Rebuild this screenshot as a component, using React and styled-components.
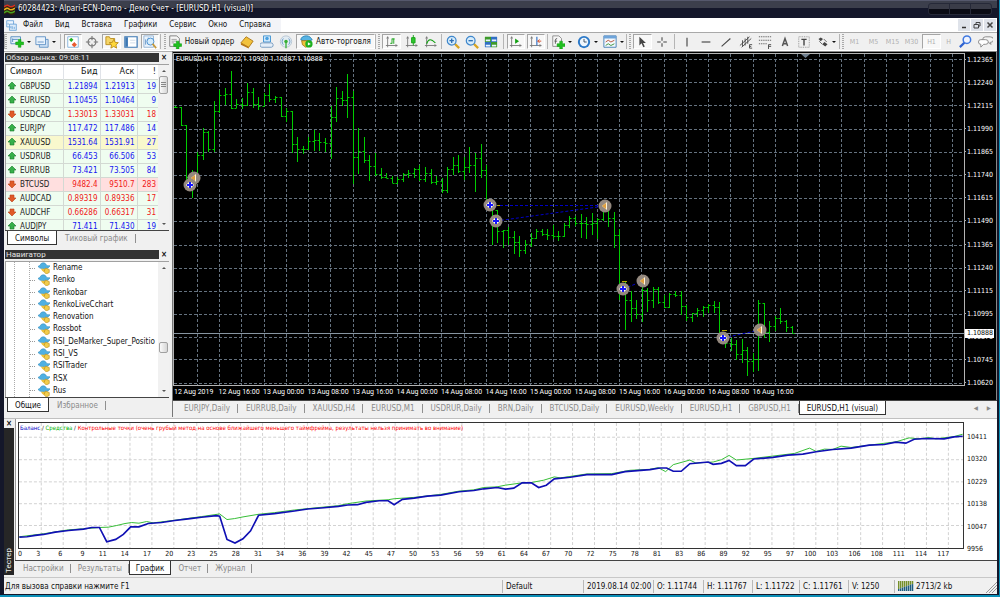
import React from "react";
import styled, { createGlobalStyle, css } from "styled-components";

const UI = `"DejaVu Sans Condensed", "Open Sans", sans-serif`;
const SMALL = `Roboto, "DejaVu Sans Condensed", sans-serif`;

const Global = createGlobalStyle`
  * { box-sizing: border-box; }
  body { margin: 0; background: #0b90b8; font-family: ${UI}; font-size: 8px; color: #111; }
  button { font: inherit; color: inherit; border: 0; background: none; padding: 0; margin: 0; }
`;

const Window = styled.div`
  display: flex;
  flex-direction: column;
  height: 100vh;
  min-height: 590px;
  border: solid #0b90b8;
  border-width: 0 1px 2px 0;
`;
const Frame = styled.div`
  display: flex;
  flex-direction: column;
  flex: 1;
  min-height: 0;
  background: #f0f0f0;
  border: solid #14172a;
  border-width: 0 2px 1px 4px;
`;

/* Title */
const TitleBar = styled.header`
  display: flex;
  align-items: center;
  justify-content: space-between;
  height: 18px;
  padding: 0 5px 0 0;
  background: linear-gradient(#55586c 0 1px, #3c3f4c 1px 8px, #14172a 8px);
  color: #fff;
`;
const TitleText = styled.h1`
  display: flex;
  align-items: center;
  gap: 3px;
  margin: 0;
  font: 400 8px/14px ${UI};
  text-shadow: 0 0 2px #000;
  white-space: nowrap;
`;
const WindowButtons = styled.div`
  display: flex;
  width: 64px;
  height: 12px;
  border: 1px solid #262938;
  border-radius: 3px;
  background: linear-gradient(#3a3c48 0 5px, #0a0b14 5px);
`;
const WindowButton = styled.button`
  flex: 1;
  & + & { border-left: 1px solid #262938; }
`;

/* Menu */
const MenuBar = styled.nav`
  display: flex;
  justify-content: space-between;
  height: 14px;
  background: #fff;
`;
const MenuList = styled.div`
  display: flex;
  align-items: center;
  gap: 12px;
  padding: 0 10px 0 2px;
  background: #f3f4f8;
`;
const MenuItem = styled.button`
  line-height: 12px;
  white-space: nowrap;
  svg { display: block; margin-right: -6px; }
`;
const MdiButtons = styled.div`
  display: flex;
  gap: 1px;
  padding: 1px 1px 1px 0;
`;
const MdiButton = styled.button`
  display: flex;
  align-items: center;
  justify-content: center;
  width: 12px;
  height: 12px;
  background: #dfe3ea;
`;

/* Toolbar */
const Toolbar = styled.div`
  display: flex;
  align-items: stretch;
  height: 19px;
  border-top: 1px solid #a9a9a9;
  border-bottom: 1px solid #fff;
  padding: 1px 0;
  background: #f0f0f0;
`;
const Group = styled.div`
  display: flex;
  flex: 0 0 auto;
  width: ${(p) => p.$w}px;
`;
const sunken = css`
  background: #f8f8f8;
  border: 1px solid;
  border-color: #a5a5a5 #fff #fff #a5a5a5;
`;
const Tool = styled.button`
  display: flex;
  flex: 1 1 0;
  min-width: 0;
  align-items: center;
  justify-content: center;
  gap: 3px;
  margin: 0 1px;
  svg { flex: none; }
  ${(p) => p.$on && sunken}
`;
const WideTool = styled(Tool)`
  flex: 0 0 auto;
  width: ${(p) => p.$w}px;
  margin: 0;
  line-height: 14px;
  white-space: nowrap;
`;
const PeriodTool = styled(Tool)`
  font: 7px/14px ${UI};
  color: #b0b0b0;
`;
const Separator = styled.i`
  flex: 0 0 auto;
  width: ${(p) => p.$w}px;
  background: linear-gradient(#b5b5b5, #b5b5b5) center / 1px 100% no-repeat;
`;
const Grip = styled.i`
  flex: 0 0 auto;
  width: ${(p) => p.$w}px;
  border-left: 1px solid #b5b5b5;
  background: repeating-linear-gradient(#aaa 0 1px, #f0f0f0 1px 2px) right 1px center / 2px 100% no-repeat;
`;
const Caret = styled.i`
  border: solid transparent;
  border-width: 2px 2px 0;
  border-top-color: #111;
`;

/* Main area */
const Main = styled.main`
  display: flex;
  flex: 1;
  min-height: 0;
`;
const Side = styled.aside`
  display: flex;
  flex-direction: column;
  flex: 0 0 168px;
  min-width: 0;
  gap: 5px;
  padding: 1px 3px 5px 1px;
  border-top: 1px solid #b0b0b0;
`;
const Panel = styled.section`
  display: flex;
  flex-direction: column;
  min-height: 0;
  min-width: 0;
  flex: ${(p) => p.$flex};
`;
const PanelHead = styled.div`
  display: flex;
  height: 9px;
  flex: none;
`;
const PanelTitle = styled.h2`
  flex: 1;
  margin: 0;
  padding-left: 1px;
  background: #333;
  color: #e4e4e4;
  font: 400 8px/9px ${SMALL};
`;
const CloseButton = styled.button`
  width: 10px;
  height: 9px;
  font: 700 8px/8px ${UI};
`;
const PanelBody = styled.div`
  display: flex;
  flex: 1;
  min-height: 0;
  margin-top: 2px;
  background: #fff;
  border-left: 1px solid #a0a0a0;
  border-top: 1px solid #a0a0a0;
  overflow: hidden;
`;
const ScrollTrack = styled.div`
  display: flex;
  flex-direction: column;
  align-items: center;
  flex: 0 0 11px;
  padding: 5px 0;
  background: #f1f1f1;
`;
const Arrow = styled.i`
  border: 2px solid transparent;
  ${(p) => (p.$up ? "border-bottom-color: #555; border-top: 0;" : "border-top-color: #555; border-bottom: 0;")}
`;
const Thumb = styled.div`
  width: 9px;
  height: ${(p) => p.$h}px;
  border: 1px solid #a0a0a0;
  border-radius: 2px;
  background: ${(p) => (p.$ribs ? "repeating-linear-gradient(#888 0 1px, transparent 1px 2px) center / 5px 5px no-repeat, " : "")}
    linear-gradient(90deg, #fafafa, #d6d6d6);
`;
const Fill = styled.div`flex: ${(p) => p.$n} 1 0;`;

const Quotes = styled.table`
  flex: 1;
  min-width: 0;
  align-self: flex-start;
  border-collapse: collapse;
  table-layout: fixed;
  width: 100%;
  font: 8px/13px ${UI};
  th { height: 14px; padding: 0 2px 0 4px; font-size: 9px; font-weight: 400; text-align: right; border-right: 1px solid #e0e3e8; }
  th:first-child { width: 57px; text-align: left; }
  th:nth-child(2), th:nth-child(3) { width: 37px; }
  th:last-child, td:last-child { border-right: 0; }
`;
const Quote = styled.tr`
  background: ${(p) => p.$bg || "#effdf0"};
  color: ${(p) => (p.$down ? "#f01818" : "#1414f0")};
  td { height: 14px; padding: 0 2px; text-align: right; border: solid #d3d9d3; border-width: 1px 1px 0 0; }
  td:first-child { color: #222; text-align: left; }
`;
const SymbolCell = styled.span`
  display: flex;
  align-items: center;
  gap: 4px;
`;

const Tabs = styled.div`
  display: flex;
  flex: none;
  align-items: flex-start;
  height: 15px;
  padding-left: ${(p) => p.$pad}px;
  border-top: 1px solid #444;
  color: #8a8a8a;
`;
const Tab = styled.button`
  height: 14px;
  padding: 0 ${(p) => p.$gap}px;
  white-space: nowrap;
  background: linear-gradient(#909090, #909090) right center / 1px 9px no-repeat;
  ${(p) =>
    p.$active &&
    css`
      background: #fff;
      color: #111;
      border: solid #333;
      border-width: 0 1px 1px;
      padding: 1px ${p.$gap - 1}px 0;
    `}
`;
const TabScroll = styled.div`
  display: flex;
  gap: 9px;
  margin-left: auto;
  padding-right: 6px;
  font-size: 6px;
  line-height: 14px;
`;

const Tree = styled.ul`
  display: grid;
  grid-auto-rows: 1fr;
  flex: 1;
  min-width: 0;
  margin: 0;
  padding: 0 0 0 24px;
  list-style: none;
  overflow: hidden;
  background:
    repeating-linear-gradient(#aaa 0 1px, transparent 1px 2px) 8px 0 / 1px 100% no-repeat,
    repeating-linear-gradient(#aaa 0 1px, transparent 1px 2px) 23px 0 / 1px 100% no-repeat;
`;
const Leaf = styled.li`
  display: flex;
  align-items: center;
  gap: 3px;
  min-height: 0;
  line-height: 12px;
  white-space: nowrap;
  &::before { content: ""; flex: none; width: 5px; border-top: 1px dotted #999; }
  svg { flex: none; }
`;

/* Price chart */
const ChartArea = styled.section`
  display: flex;
  flex-direction: column;
  flex: 1;
  min-width: 0;
  padding-bottom: 2px;
  border-left: 1px solid #777;
`;
const ChartFrame = styled.div`
  display: flex;
  flex: 1;
  min-height: 0;
  background: #000;
  border: 1px solid #888;
  border-width: 1px 1px 0 0;
  padding: 1px 0 2px;
  color: #fff;
  font: 7px/10px ${UI};
`;
const PlotColumn = styled.div`
  position: relative;
  display: flex;
  flex-direction: column;
  flex: 1;
  min-width: 0;
`;
const Plot = styled.svg`
  display: block;
  flex: 1;
  width: 100%;
  min-height: 0;
  border: 1px solid #b4b4b4;
`;
const Quoteline = styled.div`
  position: absolute;
  left: 3px;
  top: 1px;
  white-space: pre;
  font-family: ${SMALL};
`;
const TimeAxis = styled.div`
  display: flex;
  height: 12px;
  padding-left: 1px;
  overflow: hidden;
  font: 7px/12px ${SMALL};
`;
const Time = styled.span`
  flex: 0 0 calc(100% * 2 / 35.55);
  white-space: nowrap;
`;
const PriceAxis = styled.div`
  position: relative;
  display: flex;
  flex-direction: column;
  justify-content: space-between;
  flex: 0 0 31px;
  padding: 2px 0 10px 2px;
  span::before { content: ""; display: inline-block; width: 2px; height: 1px; margin: 0 1px 2px -3px; background: #aaa; }
`;
const PriceTag = styled.b`
  position: absolute;
  left: 0;
  right: 2px;
  top: 80%;
  padding-left: 2px;
  background: #fff;
  color: #000;
  font: 7px/9px ${UI};
`;

/* Tester */
const Tester = styled.section`
  display: flex;
  flex: none;
  margin-top: 1px;
  padding-bottom: 2px;
  border-top: 1px solid #c0c0c0;
`;
const TesterRail = styled.div`
  display: flex;
  flex-direction: column;
  flex: 0 0 10px;
  padding: 0 1px 0 0;
`;
const RailTitle = styled.h2`
  flex: 1;
  margin: 0;
  padding-top: 2px;
  writing-mode: vertical-rl;
  transform: rotate(180deg);
  background: #262626;
  color: #eee;
  font: 400 8px/9px ${SMALL};
`;
const TesterBody = styled.div`
  flex: 1;
  min-width: 0;
`;
const TesterChart = styled.div`
  display: flex;
  padding: 3px 0 0 2px;
  background: #fff;
  border-left: 1px solid #999;
  font: 7px/10px ${UI};
`;
const TesterPlot = styled.div`
  position: relative;
  flex: 1;
  min-width: 0;
`;
const Curve = styled.svg`
  display: block;
  width: 100%;
  height: 127px;
  border: 1px solid #333;
`;
const Legend = styled.div`
  position: absolute;
  left: 2px;
  top: 1px;
  white-space: pre;
  font: 6px/10px ${UI};
`;
const Ink = styled.span`color: ${(p) => p.$c};`;
const CountAxis = styled.div`
  display: flex;
  height: 11px;
`;
const Count = styled.span`
  display: flex;
  justify-content: flex-end;
  flex: 0 0 calc(100% / 42.66);
  min-width: 0;
  &:first-child { justify-content: space-between; }
`;
const MoneyAxis = styled.div`
  display: flex;
  flex-direction: column;
  justify-content: space-between;
  flex: 0 0 33px;
  height: 132px;
  padding: 10px 0 0 3px;
`;

/* Status */
const Status = styled.footer`
  display: flex;
  flex: none;
  align-items: center;
  height: 17px;
  border-top: 1px solid #c8c8c8;
`;
const StatusCell = styled.span`
  display: flex;
  align-items: center;
  gap: 2px;
  line-height: 13px;
  flex: ${(p) => (p.$w ? `0 0 ${p.$w}px` : 1)};
  padding-left: ${(p) => (p.$w ? 3 : 1)}px;
  white-space: nowrap;
  border-left: ${(p) => (p.$w ? "1px solid #b8b8b8" : 0)};
`;
const SizeGrip = styled.svg`
  margin-left: auto;
  align-self: flex-end;
`;

const G = "#12a012";
const axis = <path d="M3 2v12M1 12h13M2 4l1-2 1 2M12 11l2 1-2 1" stroke="#777" fill="none" />;
const plus = (x, y) => <path d={`M${x} ${y - 4}h3v3h3v3h-3v3h-3v-3h-3v-3h3z`} fill="#1fc01f" stroke="#0a9a0a" strokeWidth=".6" />;
const lens = (sign) => (
  <>
    <path d="M10 10l5 5" stroke="#d9a520" strokeWidth="2.6" />
    <circle cx="6.5" cy="6.5" r="5" fill="#d6ecfb" stroke="#3f87cc" strokeWidth="1.4" />
    <path d={sign} stroke="#2d6fb5" strokeWidth="1.5" fill="none" />
  </>
);
const ICONS = {
  newChart: <><path d="M1 2h11v8H1z" fill="#e8f2fb" stroke="#4c86bd" /><path d="M3 4v4M3 5h6" stroke="#4c86bd" />{plus(9.5, 9)}</>,
  profiles: <><path d="M5 5h10v9H5z" fill="#cfe2f5" stroke="#5c8fc4" /><path d="M1 2h11v9H1z" fill="#eaf3fc" stroke="#5c8fc4" /><path d="M3 8h7" stroke="#5c8fc4" /></>,
  market: <><path d="M2 2h12v12H2z" fill="#fff" stroke="#7fb0dc" /><path d="M6 3l2.500 2.500L6 8 3.500 5.500z" fill="#22b022" /><path d="M9.500 8l3 3-3 3-3-3z" fill="#e85a30" /></>,
  target: <path d="M8 1v5M8 10v5M1 8h5M10 8h5M8 3.500a4.500 4.500 0 1 0 0 9 4.500 4.500 0 0 0 0-9z" fill="none" stroke="#777" strokeWidth="1.3" />,
  navigator: <><path d="M1 2h4l1 2h5v7H1z" fill="#f5d568" stroke="#b88a18" /><path d="M10 5l1.6 3.4 3.6.4-2.7 2.5.8 3.7-3.3-1.9L6.700 15l.8-3.700L4.800 8.800l3.600-.4z" fill="#ffd83a" stroke="#b88a18" /></>,
  terminal: <><path d="M1 2h14v12H1z" fill="#fff" stroke="#3d78b4" strokeWidth="1.4" /><path d="M1.500 2.500h3v11h-3z" fill="#3d78b4" /><path d="M7 6h6M7 9h6" stroke="#ccd8e6" /></>,
  tester: <><path d="M1 1h11v13H1z" fill="#eaf3fc" stroke="#8fb1d2" /><path d="M3 11V5M6 9V3" stroke="#5c8fc4" /><circle cx="8.500" cy="7.500" r="4" fill="#d6ecfb" stroke="#3f87cc" /><path d="M11 10l4 5" stroke="#c79a3a" strokeWidth="2" /></>,
  order: <><path d="M2 1h8l3 3v9H2z" fill="#f6f6f6" stroke="#777" /><path d="M4 5h6M4 7h6M4 9h3" stroke="#999" />{plus(9.5, 11)}</>,
  book: <><path d="M1 9l6-7 8 5-5 7z" fill="#f2c23c" stroke="#a97312" /><path d="M1 9l9 5v1.500L1 11z" fill="#b8740f" /></>,
  cloud: <><path d="M4 1h8v7H4z" fill="#cfe8fb" stroke="#3a8fd0" /><circle cx="8" cy="4" r="2" fill="#4aa0e0" /><path d="M2 14a2.500 2.500 0 0 1 1-5h9a2.500 2.500 0 0 1 1 5z" fill="#e4eef8" stroke="#7096bb" /></>,
  signal: <><circle cx="8" cy="7.500" r="6.500" fill="#e3ecf3" stroke="#b3c4d2" /><path d="M5 11a5 5 0 0 1 0-7M11 11a5 5 0 0 0 0-7" stroke="#5b93c4" fill="none" /><circle cx="8" cy="7.500" r="2" fill="#37b037" /><path d="M8 8v7" stroke="#37b037" strokeWidth="1.500" /></>,
  auto: <><path d="M1 6c0-3 3-5 7-5s6 3 7 5c-4 2-10 2-14 0z" fill="#58b4e4" stroke="#277faf" /><path d="M2 7h10v6l-5 2-4-3z" fill="#f0c33c" stroke="#a97312" /><circle cx="11" cy="11" r="4.500" fill="#1fb01f" /><path d="M9.700 9l3.600 2-3.600 2z" fill="#fff" /></>,
  bars: <>{axis}<path d="M8 4v6M8 4.500h3M6 9.500h2M10 4v6" stroke={G} fill="none" /></>,
  candles: <>{axis}<path d="M9.500 0v12" stroke={G} /><path d="M7.500 3h4v6h-4z" fill="#2cc52c" stroke={G} /></>,
  line: <>{axis}<path d="M3 10c2-6 5-6 10-1" stroke={G} fill="none" strokeWidth="1.300" /></>,
  zoomIn: lens("M4 6.500h5M6.500 4v5"),
  zoomOut: lens("M4 6.500h5"),
  tiles: <><path d="M1 2h7v6H1z" fill="#3c9a2a" /><path d="M8 2h7v6H8z" fill="#2f6fc4" /><path d="M1 8h7v6H1z" fill="#2f6fc4" /><path d="M8 8h7v6H8z" fill="#3c9a2a" /><path d="M2 5h5v2H2zM9 5h5v2H9zM2 11h5v2H2zM9 11h5v2H9z" fill="#e9f4ff" /></>,
  scroll: <>{axis}<path d="M7 4l4.500 3L7 10z" fill={G} /></>,
  shift: <>{axis}<path d="M9 2v10" stroke="#2f6fc4" strokeWidth="1.300" /><path d="M14 7h-4M12 5l-2 2 2 2" stroke="#d0401a" fill="none" /></>,
  indicators: <><path d="M2 1h7l3 3v9H2z" fill="#f6f6f6" stroke="#888" /><path d="M5 10V6q0-2 2-2M4 7h3" stroke="#555" fill="none" />{plus(10, 11)}</>,
  clock: <><circle cx="8" cy="8" r="7" fill="#2a78c8" /><circle cx="8" cy="8" r="4.800" fill="#eef6fd" /><path d="M8 4.500V8h3" stroke="#345" fill="none" /></>,
  template: <><path d="M1 1h14v13H1z" fill="#f4f9fe" stroke="#3d78b4" /><path d="M1 1h14v3H1z" fill="#6ea4da" /><path d="M3 8l3-2 3 2 4-2" stroke="#b0452a" fill="none" /><path d="M3 12l3-2 3 2 4-2" stroke="#2c8a2c" fill="none" /></>,
  cursor: <path d="M5 2v10l2.500-2.500L9.500 14l1.700-.8-2-4.200h3.300z" fill="#444" />,
  cross: <path d="M8 2.500v4M8 9.500v4M2.500 8h4M9.500 8h4" stroke="#444" strokeWidth="1.200" fill="none" />,
  vline: <path d="M8 3v10" stroke="#444" strokeWidth="1.300" />,
  hline: <path d="M3 8h10" stroke="#444" strokeWidth="1.300" />,
  trend: <path d="M3 13L13 4" stroke="#444" strokeWidth="1.200" />,
  channel: <><path d="M1 12L12 2M3 14L14 4M4 6v7M7 4v8M10 2v8" stroke="#444" fill="none" /><path d="M15 11h-3v4h3M12 13h2" stroke="#444" fill="none" /></>,
  fib: <><path d="M1 2h14M1 6h14M1 10h9" stroke="#555" strokeDasharray="1.500 1" /><path d="M15 11h-3v5M12 13h3" stroke="#444" fill="none" /></>,
  letterA: <path d="M5 12.500L8 4l3 8.500M6 10h4" stroke="#555" strokeWidth="1.700" fill="none" />,
  label: <><path d="M2 2h12v12H2z" fill="none" stroke="#888" strokeDasharray="1 1" /><path d="M5 5h6M8 5v7" stroke="#444" strokeWidth="1.600" /></>,
  arrows: <><path d="M2 4l3-2 3 2-3 3z" fill="#444" /><path d="M7 11l3-3 4 3-3 3z" fill="#444" /><path d="M3 7l4 4M9 4l4 4" stroke="#444" /></>,
  search: <><path d="M7 9l-5 5" stroke="#2f62d0" strokeWidth="2.400" /><circle cx="9.500" cy="6" r="4" fill="#eef3ff" stroke="#3f78e0" strokeWidth="1.600" /></>,
  chat: <><path d="M8 3h5a3 2.500 0 0 1 0 6l1 2-3-2H8a3 3 0 0 1 0-6z" fill="#f4f4f4" stroke="#888" /><path d="M3 6h5a3 2.500 0 0 1 0 5H6l-3 3v-3a2.500 2.500 0 0 1 0-5z" fill="#fff" stroke="#888" /></>,
  app: <><path d="M1 1h10v9H1z" fill="#eef6ff" stroke="#4b8fd0" /><path d="M5 6h10v9H5z" fill="#dcebfa" stroke="#4b8fd0" /><path d="M7 12v-3M9 13v-4M12 13v-3M3 4v3" stroke="#4b8fd0" /></>,
  expert: <><path d="M0 6c1-1 2-1 3-2 1-4 7-4 8 0 1 1 3 1 5 1-2 5-12 6-16 1z" fill="#4fb0e2" stroke="#2c86b8" strokeWidth=".7" /><path d="M4 9h7v4c-3 1-5 0-7-4z" fill="#eec13a" /><path d="M10 8l5 2v4l-4 2-3-3z" fill="#f2cd4c" stroke="#b88a18" strokeWidth=".8" /></>,
};
const Icon = ({ name, size = 14 }) => (
  <svg width={size} height={size} viewBox="0 0 16 16" aria-hidden="true">{ICONS[name]}</svg>
);
const ToolSet = ({ w, size, items }) => (
  <Group $w={w}>
    {items.map(([name, title, on, menu]) => (
      <Tool key={name} title={title} aria-label={title} $on={on}>
        <Icon name={name} size={size} />
        {menu && <Caret />}
      </Tool>
    ))}
  </Group>
);

const QUOTES = [
  ["GBPUSD", "1.21894", "1.21913", 19], ["EURUSD", "1.10455", "1.10464", 9],
  ["USDCAD", "1.33013", "1.33031", 18, true], ["EURJPY", "117.472", "117.486", 14],
  ["XAUUSD", "1531.64", "1531.91", 27, false, "#f9f8cd"], ["USDRUB", "66.453", "66.506", 53],
  ["EURRUB", "73.421", "73.505", 84], ["BTCUSD", "9482.4", "9510.7", 283, true, "#ffdfdf"],
  ["AUDCAD", "0.89319", "0.89336", 17, true], ["AUDCHF", "0.66286", "0.66317", 31, true],
  ["AUDJPY", "71.411", "71.430", 19],
];
const EXPERTS = ["Rename", "Renko", "Renkobar", "RenkoLiveCchart", "Renovation", "Rossbot", "RSI_DeMarker_Super_Positio", "RSI_VS", "RSITrader", "RSX", "Rus"];
const CHART_TABS = ["EURJPY,Daily", "EURRUB,Daily", "XAUUSD,H4", "EURUSD,M1", "USDRUR,Daily", "BRN,Daily", "BTCUSD,Daily", "EURUSD,Weekly", "EURUSD,H1", "GBPUSD,H1", "EURUSD,H1 (visual)"];
const PRICES = ["1.12365", "1.12240", "1.12115", "1.11990", "1.11865", "1.11740", "1.11615", "1.11490", "1.11365", "1.11240", "1.11115", "1.10995", "1.10870", "1.10745", "1.10620"];
const TIMES = ["12 Aug 2019", "12 Aug 16:00", "13 Aug 00:00", "13 Aug 08:00", "13 Aug 16:00", "14 Aug 00:00", "14 Aug 08:00", "14 Aug 16:00", "15 Aug 00:00", "15 Aug 08:00", "15 Aug 16:00", "16 Aug 00:00", "16 Aug 08:00", "16 Aug 16:00"];
const COUNTS = [3, 6, 9, 11, 14, 17, 20, 23, 25, 28, 31, 34, 36, 39, 42, 45, 47, 50, 53, 56, 59, 61, 64, 67, 70, 72, 75, 78, 81, 83, 86, 89, 92, 95, 97, 100, 103, 106, 108, 111, 114, 117];
const MONEY = [10411, 10320, 10229, 10138, 10047, 9956];

/* High, low and close of every hourly bar, as heights in the plot. */
const BARS = [
  [106, 108, 107], [107, 126, 125], [125, 188, 177], [170, 198, 175], [152, 179, 155], [128, 160, 132], [131, 152, 149], [101, 152, 111],
  [90, 113, 95], [88, 105, 94], [71, 109, 108], [99, 108, 104], [98, 109, 105], [83, 106, 92], [88, 108, 104], [97, 110, 106],
  [93, 106, 95], [84, 102, 99], [96, 103, 97], [97, 117, 116], [108, 122, 111], [111, 153, 144], [137, 162, 149], [146, 154, 149],
  [137, 150, 141], [130, 151, 140], [133, 151, 142], [138, 152, 143], [106, 159, 117], [87, 122, 98], [91, 106, 100], [74, 118, 97],
  [91, 184, 157], [128, 174, 151], [137, 163, 160], [155, 181, 166], [153, 176, 174], [168, 179, 177], [173, 178, 178], [176, 183, 183],
  [177, 184, 179], [173, 182, 174], [170, 178, 173], [168, 178, 169], [165, 181, 179], [167, 182, 173], [169, 184, 182], [176, 185, 181],
  [178, 193, 190], [167, 193, 169], [157, 175, 165], [155, 173, 171], [157, 180, 167], [147, 173, 165], [153, 192, 158], [144, 178, 170],
  [165, 205, 204], [200, 245, 208], [210, 243, 231], [230, 248, 230], [227, 245, 237], [231, 254, 242], [236, 257, 250], [240, 254, 244],
  [233, 247, 238], [229, 239, 231], [229, 236, 234], [229, 240, 235], [225, 239, 236], [231, 241, 236], [223, 237, 225], [216, 228, 218],
  [216, 226, 223], [214, 238, 223], [217, 239, 224], [213, 235, 223], [218, 239, 219], [207, 221, 210], [205, 227, 218], [212, 248, 235],
  [229, 300, 292], [281, 330, 300], [291, 322, 308], [300, 319, 314], [285, 322, 290], [288, 312, 300], [287, 308, 289], [287, 304, 302],
  [295, 308, 307], [293, 308, 294], [291, 297, 295], [291, 315, 306], [305, 321, 317], [313, 322, 313], [308, 317, 310], [306, 317, 307],
  [304, 313, 305], [301, 313, 307], [302, 340, 338], [335, 348, 343], [338, 351, 344], [340, 360, 354], [339, 363, 350], [347, 376, 361],
  [353, 372, 359], [300, 371, 303], [303, 338, 332], [321, 342, 326], [316, 331, 318], [308, 324, 321], [320, 332, 327], [326, 333, 333],
];
const barPath = BARS.map(([h, l, c], i) => {
  const x = Math.round(175 + i * 5.555) + 0.5;
  const o = Math.min(l, Math.max(h, i ? BARS[i - 1][2] : c));
  return `M${x} ${h}V${l}M${x - 2} ${o + 0.5}H${x}M${x} ${c + 0.5}h2`;
}).join("");
const GRID_Y = [59.5, 82.5, 105.5, 129.5, 152.5, 175.5, 198.5, 221.5, 245.5, 268.5, 291.5, 314.5, 337.5, 359.5, 383.5];
const BUYS = [[190, 185], [490, 205], [496, 221], [623, 289], [723, 338]];
const SELLS = [[194, 178], [605, 206], [643, 281], [760, 330]];

const PriceChart = () => (
  <Plot viewBox="174 54 790 331" preserveAspectRatio="none" role="img" aria-label="EURUSD,H1">
    <g stroke="#65727f" strokeDasharray="3 2">
      {GRID_Y.map((y) => <path key={y} d={`M174 ${y}H964`} />)}
      {Array.from({ length: 35 }, (_, i) => Math.round(197 + i * 22.22) + 0.5).map((x) => <path key={x} d={`M${x} 54V385`} />)}
    </g>
    <path d="M174 333.500H964" stroke="#8795a1" />
    <path d="M801 54h9l-4.500 4z" fill="#708090" />
    <path d={barPath} stroke="#00cc00" fill="none" />
    <g stroke="#0000c8" strokeDasharray="3 2">
      <path d="M490 205.500H605M496 221L605 206M623 289L643 281M723 338L760 330" />
    </g>
    {SELLS.map(([x, y]) => (
      <g key={x}>
        <circle cx={x} cy={y} r="6.500" fill="#94897f" />
        <path d={`M${x + 2} ${y - 4}v8l-5 -4z`} fill="#fff3d8" />
        <path d={`M${x + 1} ${y - 3}v6l-4 -3z`} fill="#e0a040" />
      </g>
    ))}
    {BUYS.map(([x, y]) => (
      <g key={x}>
        <circle cx={x} cy={y} r="6.500" fill="#94897f" />
        <path d={`M${x - 4} ${y}l3 -3h2l3 3 -3 3h-2z`} fill="#fff" />
        <path d={`M${x - 1} ${y - 3}h2v2h2v2h-2v2h-2v-2h-2v-2h2z`} fill="#1414ff" />
      </g>
    ))}
    <path d="M497 205.500h3M622 281.500h5M722 330.500h5" stroke="#b4a800" />
  </Plot>
);

/* The curves are kept in thirds of a pixel, in pieces that each have their own origin. */
const piece = (dx, dy, pts) => pts.map(([x, y]) => [x + dx, y + dy]);
const toPoints = (...pieces) => pieces.flat().map((p) => p.join()).join(" ");
const BALANCE = toPoints(
  piece(-51, -36, [[52, 381], [75, 380], [100, 376], [125, 373], [160, 366], [200, 361], [245, 357], [270, 352], [293, 352], [315, 395], [342, 388], [365, 373], [387, 350], [412, 350], [440, 340], [480, 337], [520, 331], [560, 326], [600, 321], [645, 316], [655, 318], [677, 388], [701, 399], [725, 386], [748, 362], [772, 315], [820, 310], [880, 302], [920, 296], [960, 293]]),
  piece(939, -66, [[22, 318], [50, 314], [80, 313], [105, 306], [145, 301], [172, 301], [190, 313], [215, 297], [250, 293], [290, 287], [330, 284], [385, 274], [430, 270], [460, 265], [500, 261], [525, 266], [550, 263], [575, 247], [603, 247], [625, 261], [648, 254], [672, 235], [720, 230], [770, 222], [845, 222], [885, 213], [960, 207], [990, 202]]),
  piece(1929, -66, [[20, 202], [40, 212], [64, 212], [90, 189], [145, 184], [160, 191], [185, 188], [208, 179], [230, 195], [257, 195], [282, 175], [340, 170], [385, 163], [430, 160], [470, 153], [520, 146], [575, 142], [630, 133], [675, 131], [710, 124], [740, 127], [765, 115], [800, 113], [855, 114], [885, 108], [911, 106]])
);
const EQUITY = toPoints(
  piece(-51, -36, [[52, 380], [125, 371], [200, 359], [245, 356], [293, 352], [320, 351], [345, 346], [370, 340], [390, 337], [412, 339], [435, 334], [455, 338], [520, 330], [600, 319], [655, 311], [677, 328], [700, 325], [725, 320], [772, 312], [820, 307], [880, 299], [960, 291]]),
  piece(939, -66, [[22, 316], [50, 310], [105, 302], [172, 298], [190, 295], [250, 291], [330, 282], [385, 272], [430, 268], [460, 261], [500, 259], [525, 254], [575, 247], [603, 246], [640, 239], [672, 229], [690, 232], [770, 220], [845, 219], [900, 209], [960, 206], [985, 201]]),
  piece(1929, -66, [[17, 213], [40, 192], [90, 178], [108, 187], [160, 184], [185, 177], [208, 164], [230, 178], [282, 173], [340, 166], [405, 158], [450, 142], [470, 152], [495, 145], [520, 146], [545, 136], [575, 140], [630, 133], [710, 123], [750, 111], [780, 114], [810, 110], [830, 114], [885, 107], [911, 100]])
);

const TesterCurve = () => (
  <Curve viewBox="0 0 2841 378" preserveAspectRatio="none" role="img" aria-label="График">
    <g stroke="#d2d2d2" strokeWidth="3" strokeDasharray="9 6">
      {[43, 111, 178, 244, 310].map((y) => <path key={y} d={`M0 ${y}H2841`} />)}
      {Array.from({ length: 42 }, (_, i) => Math.round((i + 1) * 22.2) * 3 + 1).map((x) => <path key={x} d={`M${x} 0V378`} />)}
    </g>
    <polyline points={EQUITY} fill="none" stroke="#35bd35" strokeWidth="3" />
    <polyline points={BALANCE} fill="none" stroke="#1010b4" strokeWidth="5" />
  </Curve>
);

const TabStrip = ({ tabs, active, pad = 1, gap = 8, children }) => (
  <Tabs role="tablist" $pad={pad}>
    {tabs.map((t) => (
      <Tab key={t} role="tab" aria-selected={t === active} $active={t === active} $gap={gap}>{t}</Tab>
    ))}
    {children}
  </Tabs>
);

export default function App() {
  return (
    <Window>
      <Global />
      <Frame>
        <TitleBar>
          <TitleText>
            <svg width="11" height="11" viewBox="0 0 11 11" aria-hidden="true">
              <path d="M0 3q3-3 5-1t6-1v9q-4 2-6 0t-5 1z" fill="#30200a" />
              <path d="M0 3q3-3 5-1t6-1" stroke="#d83020" strokeWidth="1.500" fill="none" />
              <path d="M0 6q3-3 5-1t6-1" stroke="#e8b020" strokeWidth="1.500" fill="none" />
              <path d="M0 9q3-3 5-1t6-1" stroke="#48a020" strokeWidth="1.500" fill="none" />
            </svg>
            60284423: Alpari-ECN-Demo - Демо Счет - [EURUSD,H1 (visual)]
          </TitleText>
          <WindowButtons>
            <WindowButton aria-label="Свернуть" />
            <WindowButton aria-label="Развернуть" />
            <WindowButton aria-label="Закрыть" />
          </WindowButtons>
        </TitleBar>
        <MenuBar>
          <MenuList>
            <MenuItem aria-label="MetaTrader"><Icon name="app" size={11} /></MenuItem>
            {["Файл", "Вид", "Вставка", "Графики", "Сервис", "Окно", "Справка"].map((m) => <MenuItem key={m}>{m}</MenuItem>)}
          </MenuList>
          <MdiButtons>
            <MdiButton aria-label="Свернуть окно"><svg width="8" height="8"><path d="M2 6.500h4" stroke="#333" strokeWidth="1.500" /></svg></MdiButton>
            <MdiButton aria-label="Восстановить окно"><svg width="8" height="8"><path d="M3 3V1.500h4V5H5.500M1 3.500h4.500V7H1z" stroke="#444" fill="none" /></svg></MdiButton>
            <MdiButton aria-label="Закрыть окно"><svg width="8" height="8"><path d="M1.500 1.500l5 5M6.500 1.500l-5 5" stroke="#444" strokeWidth="1.500" /></svg></MdiButton>
          </MdiButtons>
        </MenuBar>
        <Toolbar>
          <Grip $w={4} />
          <ToolSet w={50} items={[["newChart", "Новый график", false, true], ["profiles", "Профили", false, true]]} />
          <Separator $w={5} />
          <ToolSet w={97} items={[["market", "Обзор рынка", true], ["target", "Окно данных"], ["navigator", "Навигатор", true], ["terminal", "Терминал"], ["tester", "Тестер стратегий", true]]} />
          <Grip $w={7} />
          <WideTool $w={68}><Icon name="order" />Новый ордер</WideTool>
          <Group $w={2} />
          <ToolSet w={59} items={[["book", "Маркет"], ["cloud", "Облако"], ["signal", "Сигналы"]]} />
          <WideTool $w={79} $on><Icon name="auto" size={13} />Авто-торговля</WideTool>
          <Grip $w={6} />
          <ToolSet w={59} items={[["bars", "Бары", true], ["candles", "Свечи"], ["line", "Линия"]]} />
          <Separator $w={3} />
          <ToolSet w={58} items={[["zoomIn", "Увеличить"], ["zoomOut", "Уменьшить"], ["tiles", "Мозаика"]]} />
          <Separator $w={5} />
          <ToolSet w={40} items={[["scroll", "Автопрокрутка", true], ["shift", "Сдвиг", true]]} />
          <Separator $w={3} />
          <ToolSet w={77} items={[["indicators", "Индикаторы", false, true], ["clock", "Периоды", false, true], ["template", "Шаблоны", false, true]]} />
          <Grip $w={6} />
          <ToolSet w={39} items={[["cursor", "Курсор", true], ["cross", "Перекрестие"]]} />
          <Separator $w={6} />
          <ToolSet w={137} items={[["vline", "Вертикальная линия"], ["hline", "Горизонтальная линия"], ["trend", "Трендовая линия"], ["channel", "Канал"], ["fib", "Фибоначчи"], ["letterA", "Текст"], ["label", "Метка"]]} />
          <ToolSet w={25} size={12} items={[["arrows", "Стрелки", false, true]]} />
          <Grip $w={6} />
          <Group $w={97}>
            {["M1", "M5", "M15", "M30", "H1"].map((p) => <PeriodTool key={p} $on={p === "H1"}>{p}</PeriodTool>)}
          </Group>
          <Group $w={13}><PeriodTool>H</PeriodTool></Group>
          <ToolSet w={41} size={15} items={[["search", "Поиск"], ["chat", "Сообщения"]]} />
        </Toolbar>
        <Main>
          <Side>
            <Panel $flex="0 0 192px">
              <PanelHead>
                <PanelTitle>Обзор рынка: 09:08:11</PanelTitle>
                <CloseButton aria-label="Закрыть">×</CloseButton>
              </PanelHead>
              <PanelBody>
                <Quotes>
                  <thead><tr><th>Символ</th><th>Бид</th><th>Аск</th><th>!</th></tr></thead>
                  <tbody>
                    {QUOTES.map(([s, bid, ask, spread, down, bg]) => (
                      <Quote key={s} $down={down} $bg={bg}>
                        <td>
                          <SymbolCell>
                            <svg width="8" height="8" viewBox="0 0 8 8" aria-hidden="true">
                              <path d={down ? "M4 8L0 4h2V1h4v3h2z" : "M4 0L8 4H6v3H2V4H0z"} fill={down ? "#e05a28" : "#35b04a"} stroke={down ? "#b84018" : "#187a2a"} strokeWidth=".6" />
                            </svg>
                            {s}
                          </SymbolCell>
                        </td>
                        <td>{bid}</td><td>{ask}</td><td>{spread}</td>
                      </Quote>
                    ))}
                  </tbody>
                </Quotes>
                <ScrollTrack><Arrow $up /><Fill $n={0.03} /><Thumb $h={18} $ribs /><Fill $n={1} /><Arrow /></ScrollTrack>
              </PanelBody>
              <TabStrip tabs={["Символы", "Тиковый график"]} active="Символы" pad={2} />
            </Panel>
            <Panel $flex="1 1 0">
              <PanelHead>
                <PanelTitle>Навигатор</PanelTitle>
                <CloseButton aria-label="Закрыть">×</CloseButton>
              </PanelHead>
              <PanelBody>
                <Tree>
                  {EXPERTS.map((e) => <Leaf key={e}><Icon name="expert" size={12} /><span>{e}</span></Leaf>)}
                </Tree>
                <ScrollTrack><Arrow $up /><Fill $n={75} /><Thumb $h={11} /><Fill $n={38} /><Arrow /></ScrollTrack>
              </PanelBody>
              <TabStrip tabs={["Общие", "Избранное"]} active="Общие" pad={2} />
            </Panel>
          </Side>
          <ChartArea>
            <ChartFrame>
              <PlotColumn>
                <PriceChart />
                <Quoteline>EURUSD,H1  1.10922 1.10930 1.10887 1.10888</Quoteline>
                <TimeAxis>{TIMES.map((t) => <Time key={t}>{t}</Time>)}</TimeAxis>
              </PlotColumn>
              <PriceAxis>
                {PRICES.map((p) => <span key={p}>{p}</span>)}
                <PriceTag>1.10888</PriceTag>
              </PriceAxis>
            </ChartFrame>
            <TabStrip tabs={CHART_TABS} active="EURUSD,H1 (visual)" pad={3}>
              <TabScroll><span>◀</span><span>▶</span></TabScroll>
            </TabStrip>
          </ChartArea>
        </Main>
        <Tester>
          <TesterRail>
            <CloseButton aria-label="Закрыть">×</CloseButton>
            <RailTitle>Тестер</RailTitle>
          </TesterRail>
          <TesterBody>
            <TesterChart>
              <TesterPlot>
                <TesterCurve />
                <Legend>
                  <Ink $c="#0000c8">Баланс</Ink> / <Ink $c="#00b400">Средства</Ink> / <Ink $c="#ff0000">Контрольные точки (очень грубый метод на основе ближайшего меньшего таймфрейма, результаты нельзя принимать во внимание)</Ink>
                </Legend>
                <CountAxis>
                  {COUNTS.map((n, i) => <Count key={n}>{i === 0 && <span>0</span>}<span>{n}</span></Count>)}
                </CountAxis>
              </TesterPlot>
              <MoneyAxis>{MONEY.map((m) => <span key={m}>{m}</span>)}</MoneyAxis>
            </TesterChart>
            <TabStrip tabs={["Настройки", "Результаты", "График", "Отчет", "Журнал"]} active="График" gap={7} />
          </TesterBody>
        </Tester>
        <Status>
          <StatusCell>Для вызова справки нажмите F1</StatusCell>
          <StatusCell $w={81}>Default</StatusCell>
          <StatusCell $w={70}>2019.08.14 02:00</StatusCell>
          <StatusCell $w={50}>O: 1.11744</StatusCell>
          <StatusCell $w={49}>H: 1.11767</StatusCell>
          <StatusCell $w={47}>L: 1.11722</StatusCell>
          <StatusCell $w={49}>C: 1.11761</StatusCell>
          <StatusCell $w={46}>V: 1250</StatusCell>
          <StatusCell $w={103}>
            <svg width="16" height="10" aria-hidden="true">
              {Array.from({ length: 8 }, (_, i) => (
                <g key={i}>
                  <path d={`M${i * 2 + 0.5} 0V${8 - i * 0.7}`} stroke="#76902a" strokeWidth="1.500" />
                  <path d={`M${i * 2 + 0.5} ${8 - i * 0.7}V10`} stroke="#1e5c80" strokeWidth="1.500" />
                </g>
              ))}
            </svg>
            2713/2 kb
            <SizeGrip width="12" height="12" aria-hidden="true">
              <path d="M1 12L12 1M4 12l8-8M7 12l5-5" stroke="#999" />
            </SizeGrip>
          </StatusCell>
        </Status>
      </Frame>
    </Window>
  );
}
